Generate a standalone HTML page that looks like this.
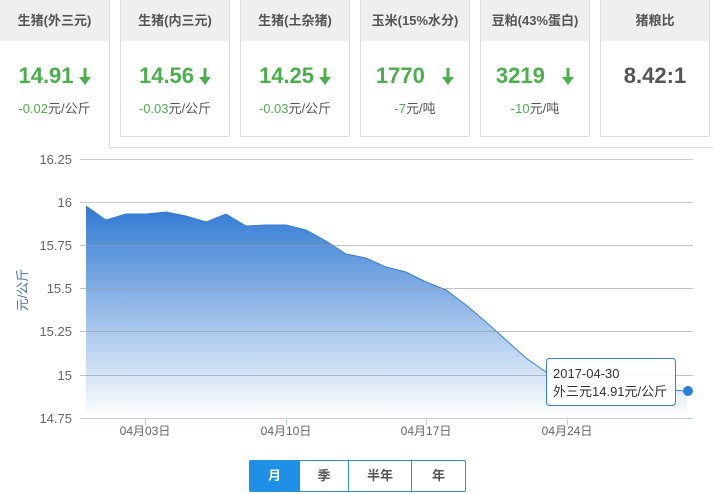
<!DOCTYPE html>
<html><head><meta charset="utf-8"><style>
body{margin:0;width:713px;height:494px;background:#fff;font-family:"Liberation Sans","Noto Sans CJK SC",sans-serif;position:relative;overflow:hidden}
.card{position:absolute;top:0;width:108px;height:136px;border:1px solid #ddd;border-top:none;background:#fff}
.card .h{height:41px;background:#efefef;text-align:center;line-height:41px;font-size:13px;font-weight:bold;color:#555}
.card .v{text-align:center;font-size:22px;font-weight:bold;color:#4cae4c;margin-top:21px;height:28px;line-height:28px}
.card .v svg{margin-left:5px;vertical-align:-2px}
.card .d{text-align:center;font-size:13px;color:#555;margin-top:8px}
.card .d b{font-weight:normal;color:#4cae4c}
.btns{position:absolute;left:249px;top:460px;height:30px;display:flex;border:1px solid #2a8fd8;border-radius:2px}
.btns div{height:30px;line-height:30px;text-align:center;font-size:13px;font-weight:bold;color:#555;border-left:1px solid #2a8fd8}
</style></head><body>
<div style="position:absolute;left:109px;top:147px;width:604px;height:1px;background:#ddd"></div>
<div class="card" style="left:0;width:109px;height:147px;border:none;border-right:1px solid #ddd"><div class="h">生猪(外三元)</div><div class="v">14.91<svg width="12" height="17" viewBox="0 0 12 17"><rect x="4.5" y="0" width="3" height="11" fill="#4cae4c"/><path d="M0 9 L12 9 L6 17 Z" fill="#4cae4c"/></svg></div><div class="d"><b>-0.02</b>元/公斤</div></div>
<div class="card" style="left:120px"><div class="h">生猪(内三元)</div><div class="v">14.56<svg width="12" height="17" viewBox="0 0 12 17"><rect x="4.5" y="0" width="3" height="11" fill="#4cae4c"/><path d="M0 9 L12 9 L6 17 Z" fill="#4cae4c"/></svg></div><div class="d"><b>-0.03</b>元/公斤</div></div>
<div class="card" style="left:240px"><div class="h">生猪(土杂猪)</div><div class="v">14.25<svg width="12" height="17" viewBox="0 0 12 17"><rect x="4.5" y="0" width="3" height="11" fill="#4cae4c"/><path d="M0 9 L12 9 L6 17 Z" fill="#4cae4c"/></svg></div><div class="d"><b>-0.03</b>元/公斤</div></div>
<div class="card" style="left:360px"><div class="h">玉米(15%水分)</div><div class="v">1770 &nbsp;<svg width="12" height="17" viewBox="0 0 12 17"><rect x="4.5" y="0" width="3" height="11" fill="#4cae4c"/><path d="M0 9 L12 9 L6 17 Z" fill="#4cae4c"/></svg></div><div class="d"><b>-7</b>元/吨</div></div>
<div class="card" style="left:480px"><div class="h">豆粕(43%蛋白)</div><div class="v">3219 &nbsp;<svg width="12" height="17" viewBox="0 0 12 17"><rect x="4.5" y="0" width="3" height="11" fill="#4cae4c"/><path d="M0 9 L12 9 L6 17 Z" fill="#4cae4c"/></svg></div><div class="d"><b>-10</b>元/吨</div></div>
<div class="card" style="left:600px"><div class="h">猪粮比</div><div class="v" style="color:#555">8.42:1</div></div>
<svg style="position:absolute;left:0;top:0" width="713" height="494">
<defs><linearGradient id="g" x1="0" y1="0" x2="0" y2="1"><stop offset="0" stop-color="#3079d3"/><stop offset="1" stop-color="#fff"/></linearGradient></defs>
<g stroke="#ccc" stroke-width="1">
<line x1="80" y1="159.5" x2="693" y2="159.5"/><line x1="80" y1="202.5" x2="693" y2="202.5"/>
</g>
<path d="M86 206 L106 220 L126 214 L146 214 L166 212 L186 216 L206 222 L226 214 L246 226 L266 225 L286 225 L306 230 L326 241 L346 254 L366 258 L386 267 L406 272 L426 282 L446 290 L466 305 L486 322 L506 340 L526 358 L546 372 L566 379 L586 384 L606 387 L626 389 L646 390 L666 390 L687 391 L687 418 L86 418 Z" fill="url(#g)"/>
<path d="M86 206 L106 220 L126 214 L146 214 L166 212 L186 216 L206 222 L226 214 L246 226 L266 225 L286 225 L306 230 L326 241 L346 254 L366 258 L386 267 L406 272 L426 282 L446 290 L466 305 L486 322 L506 340 L526 358 L546 372 L566 379 L586 384 L606 387 L626 389 L646 390 L666 390 L687 391" fill="none" stroke="#3a7fd5" stroke-width="1"/>
<g stroke="#999" stroke-opacity="0.6" stroke-width="1">
<line x1="80" y1="245.5" x2="693" y2="245.5"/><line x1="80" y1="288.5" x2="693" y2="288.5"/><line x1="80" y1="331.5" x2="693" y2="331.5"/><line x1="80" y1="375.5" x2="693" y2="375.5"/>
</g>
<line x1="80" y1="418.5" x2="693" y2="418.5" stroke="#c0d0e0"/>
<g stroke="#c0d0e0"><line x1="145.5" y1="418" x2="145.5" y2="425"/><line x1="286.5" y1="418" x2="286.5" y2="425"/><line x1="426.5" y1="418" x2="426.5" y2="425"/><line x1="567.5" y1="418" x2="567.5" y2="425"/></g>
<g font-size="13" fill="#666" text-anchor="end" font-family="Liberation Sans,sans-serif">
<text x="72" y="164">16.25</text><text x="72" y="207">16</text><text x="72" y="250">15.75</text><text x="72" y="293">15.5</text><text x="72" y="336">15.25</text><text x="72" y="380">15</text><text x="72" y="423">14.75</text>
</g>
<g font-size="12" fill="#666" text-anchor="middle" font-family="Liberation Sans,Noto Sans CJK SC,sans-serif">
<text x="145" y="435">04月03日</text><text x="286" y="435">04月10日</text><text x="426" y="435">04月17日</text><text x="567" y="435">04月24日</text>
</g>
<text transform="translate(27,290) rotate(-90)" text-anchor="middle" font-size="13" fill="#4a6f94" font-family="Liberation Sans,Noto Sans CJK SC,sans-serif">元/公斤</text>
<rect x="546.5" y="358.5" width="129" height="47" rx="3" fill="#fff" fill-opacity="0.9" stroke="#3a7fd5"/>
<text x="553" y="378" font-size="13" fill="#333" font-family="Liberation Sans,Noto Sans CJK SC,sans-serif">2017-04-30</text>
<text x="553" y="396" font-size="13" fill="#333" font-family="Liberation Sans,Noto Sans CJK SC,sans-serif">外三元14.91元/公斤</text>
<circle cx="688" cy="391" r="5" fill="#2a7fd8"/>
</svg>
<div class="btns"><div style="width:49px;background:#1e90e6;color:#fff;border-left:none">月</div><div style="width:48px">季</div><div style="width:62px">半年</div><div style="width:53px">年</div></div>
</body></html>
